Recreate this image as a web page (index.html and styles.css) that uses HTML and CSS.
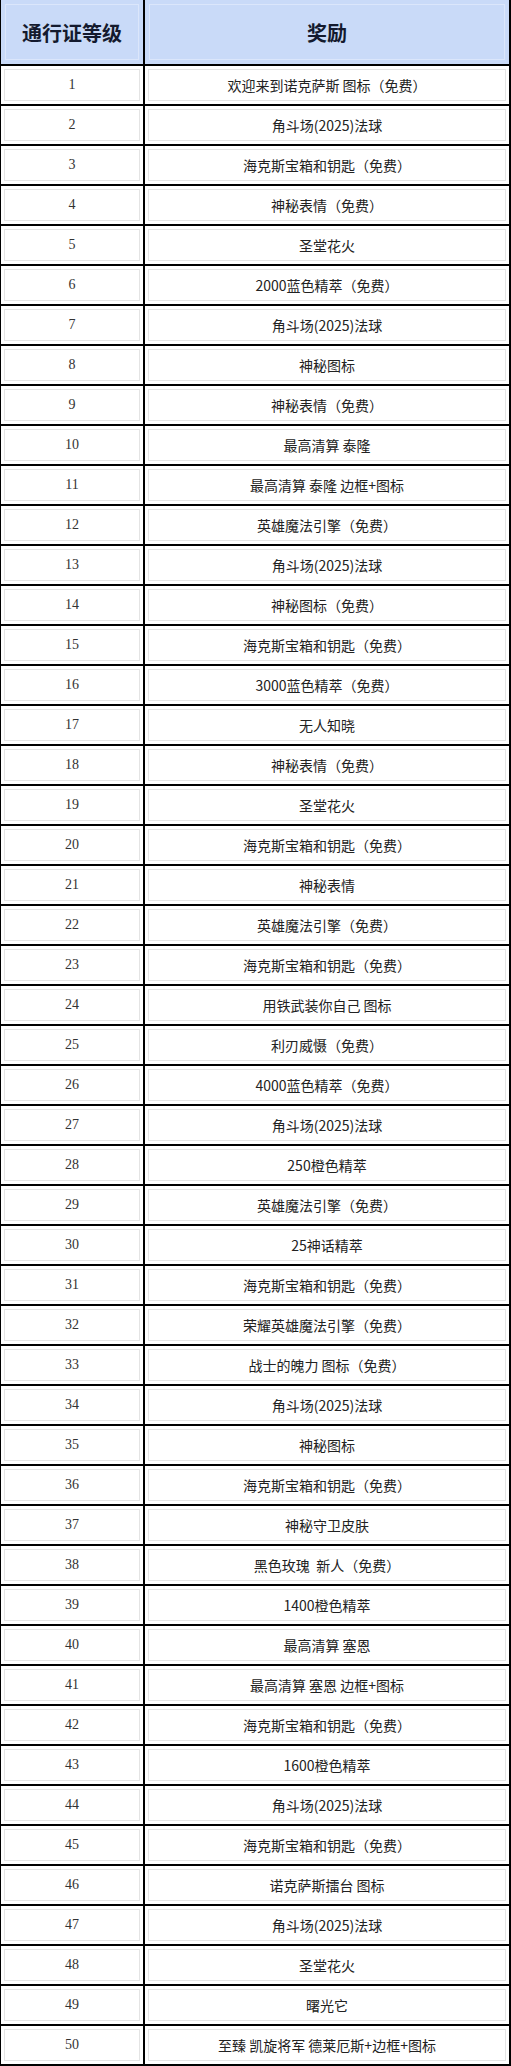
FILE: index.html
```html
<!DOCTYPE html>
<html lang="zh-CN">
<head>
<meta charset="utf-8">
<title>通行证等级奖励</title>
<link rel="stylesheet" href="styles.css">
</head>
<body>
<div class="pass-table">
  <div class="cell head">通行证等级</div>
  <div class="cell head">奖励</div>
  <div class="cell lv">1</div><div class="cell reward">欢迎来到诺克萨斯 图标（免费）</div>
  <div class="cell lv">2</div><div class="cell reward">角斗场(2025)法球</div>
  <div class="cell lv">3</div><div class="cell reward">海克斯宝箱和钥匙（免费）</div>
  <div class="cell lv">4</div><div class="cell reward">神秘表情（免费）</div>
  <div class="cell lv">5</div><div class="cell reward">圣堂花火</div>
  <div class="cell lv">6</div><div class="cell reward">2000蓝色精萃（免费）</div>
  <div class="cell lv">7</div><div class="cell reward">角斗场(2025)法球</div>
  <div class="cell lv">8</div><div class="cell reward">神秘图标</div>
  <div class="cell lv">9</div><div class="cell reward">神秘表情（免费）</div>
  <div class="cell lv">10</div><div class="cell reward">最高清算 泰隆</div>
  <div class="cell lv">11</div><div class="cell reward">最高清算 泰隆 边框+图标</div>
  <div class="cell lv">12</div><div class="cell reward">英雄魔法引擎（免费）</div>
  <div class="cell lv">13</div><div class="cell reward">角斗场(2025)法球</div>
  <div class="cell lv">14</div><div class="cell reward">神秘图标（免费）</div>
  <div class="cell lv">15</div><div class="cell reward">海克斯宝箱和钥匙（免费）</div>
  <div class="cell lv">16</div><div class="cell reward">3000蓝色精萃（免费）</div>
  <div class="cell lv">17</div><div class="cell reward">无人知晓</div>
  <div class="cell lv">18</div><div class="cell reward">神秘表情（免费）</div>
  <div class="cell lv">19</div><div class="cell reward">圣堂花火</div>
  <div class="cell lv">20</div><div class="cell reward">海克斯宝箱和钥匙（免费）</div>
  <div class="cell lv">21</div><div class="cell reward">神秘表情</div>
  <div class="cell lv">22</div><div class="cell reward">英雄魔法引擎（免费）</div>
  <div class="cell lv">23</div><div class="cell reward">海克斯宝箱和钥匙（免费）</div>
  <div class="cell lv">24</div><div class="cell reward">用铁武装你自己 图标</div>
  <div class="cell lv">25</div><div class="cell reward">利刃威慑（免费）</div>
  <div class="cell lv">26</div><div class="cell reward">4000蓝色精萃（免费）</div>
  <div class="cell lv">27</div><div class="cell reward">角斗场(2025)法球</div>
  <div class="cell lv">28</div><div class="cell reward">250橙色精萃</div>
  <div class="cell lv">29</div><div class="cell reward">英雄魔法引擎（免费）</div>
  <div class="cell lv">30</div><div class="cell reward">25神话精萃</div>
  <div class="cell lv">31</div><div class="cell reward">海克斯宝箱和钥匙（免费）</div>
  <div class="cell lv">32</div><div class="cell reward">荣耀英雄魔法引擎（免费）</div>
  <div class="cell lv">33</div><div class="cell reward">战士的魄力 图标（免费）</div>
  <div class="cell lv">34</div><div class="cell reward">角斗场(2025)法球</div>
  <div class="cell lv">35</div><div class="cell reward">神秘图标</div>
  <div class="cell lv">36</div><div class="cell reward">海克斯宝箱和钥匙（免费）</div>
  <div class="cell lv">37</div><div class="cell reward">神秘守卫皮肤</div>
  <div class="cell lv">38</div><div class="cell reward">黑色玫瑰&nbsp;&nbsp;新人（免费）</div>
  <div class="cell lv">39</div><div class="cell reward">1400橙色精萃</div>
  <div class="cell lv">40</div><div class="cell reward">最高清算 塞恩</div>
  <div class="cell lv">41</div><div class="cell reward">最高清算 塞恩 边框+图标</div>
  <div class="cell lv">42</div><div class="cell reward">海克斯宝箱和钥匙（免费）</div>
  <div class="cell lv">43</div><div class="cell reward">1600橙色精萃</div>
  <div class="cell lv">44</div><div class="cell reward">角斗场(2025)法球</div>
  <div class="cell lv">45</div><div class="cell reward">海克斯宝箱和钥匙（免费）</div>
  <div class="cell lv">46</div><div class="cell reward">诺克萨斯擂台 图标</div>
  <div class="cell lv">47</div><div class="cell reward">角斗场(2025)法球</div>
  <div class="cell lv">48</div><div class="cell reward">圣堂花火</div>
  <div class="cell lv">49</div><div class="cell reward">曙光它</div>
  <div class="cell lv">50</div><div class="cell reward">至臻 凯旋将军 德莱厄斯+边框+图标</div>
</div>
</body>
</html>
```

FILE: styles.css
```css
html, body {
  margin: 0;
  padding: 0;
  background: #ffffff;
}

.pass-table {
  width: 511px;
  box-sizing: border-box;
  display: grid;
  grid-template-columns: 142px 364px;
  grid-template-rows: 64px;
  grid-auto-rows: 38px;
  gap: 2px;
  padding: 0 2px 2px 1px;
  background: #000000;
}

.cell {
  display: flex;
  align-items: center;
  justify-content: center;
  background: #ffffff;
  color: #222222;
  box-shadow: inset 0 0 0 3px #ffffff, inset 0 0 0 4px #e4e4e4;
  white-space: nowrap;
}

.head {
  background: #c9daf8;
  color: #141a2e;
  font-family: "Noto Sans CJK SC", "Noto Sans", sans-serif;
  font-weight: 700;
  font-size: 20px;
  box-shadow: inset 0 0 0 4px #c9daf8, inset 0 0 0 5px #dbe6fb;
}

.lv {
  font-family: "Liberation Serif", "Noto Sans CJK SC", serif;
  font-size: 14px;
  color: #333333;
}

.reward {
  font-family: "Noto Sans CJK SC", "Noto Sans", sans-serif;
  font-size: 14px;
}
```
